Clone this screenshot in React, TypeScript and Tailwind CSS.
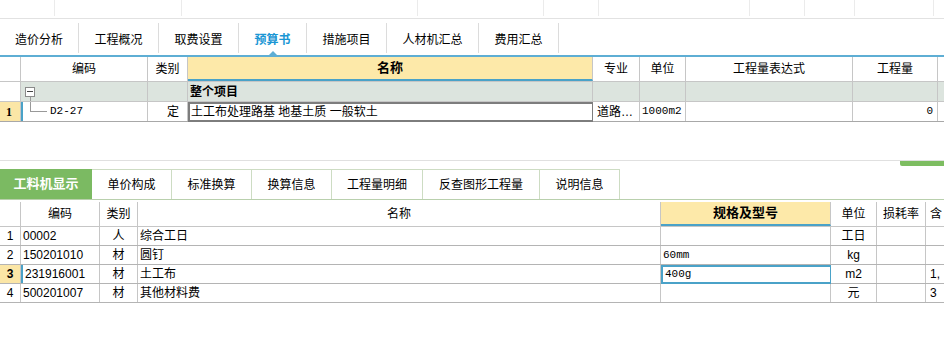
import React from "react";

type Cell = { w: string; content?: React.ReactNode; cls?: string };

const Row = ({ cells, cls }: { cells: Cell[]; cls: string }) => (
  <div className={`flex ${cls}`}>
    {cells.map((c, idx) => (
      <div
        key={idx}
        className={`${c.w} shrink-0 flex items-center overflow-hidden whitespace-nowrap border-r border-[#c6c6c6] ${c.cls ?? ""}`}
      >
        {c.content}
      </div>
    ))}
  </div>
);

const topTabs = ["造价分析", "工程概况", "取费设置", "预算书", "措施项目", "人材机汇总", "费用汇总"];
const topTabW = ["w-[79px]", "w-[80px]", "w-[80px]", "w-[68px]", "w-[80px]", "w-[92px]", "w-[80px]"];

const bottomTabs = ["工料机显示", "单价构成", "标准换算", "换算信息", "工程量明细", "反查图形工程量", "说明信息"];
const bottomTabW = ["w-[92px]", "w-[80px]", "w-[80px]", "w-[80px]", "w-[91px]", "w-[117px]", "w-[80px]"];

const rows = [
  { n: "1", code: "00002", type: "人", name: "综合工日", spec: "", unit: "工日", extra: "" },
  { n: "2", code: "150201010", type: "材", name: "圆钉", spec: "60mm", unit: "kg", extra: "" },
  { n: "3", code: "231916001", type: "材", name: "土工布", spec: "400g", unit: "m2", extra: "1," },
  { n: "4", code: "500201007", type: "材", name: "其他材料费", spec: "", unit: "元", extra: "3" },
];

export default function App() {
  return (
    <div className="w-[944px] h-[338px] bg-white overflow-hidden text-[12px] text-black font-['Liberation_Sans','Noto_Sans_CJK_SC',sans-serif]">
      {/* toolbar remnant */}
      <div className="flex h-[19px] border-b border-[#e2e2e2]">
        {["w-[55px]", "w-[127px]", "w-[236px]", "w-[126px]", "w-[55px]", "w-[151px]", "w-[55px]", "w-[50px]", "w-[79px]"].map((w, i) => (
          <div key={i} className={`${w} shrink-0 h-[16px] border-r border-[#ebebeb]`} />
        ))}
      </div>

      {/* main tabs */}
      <div className="flex items-end h-[36px] pb-[2px]">
        {topTabs.map((t, i) => (
          <div
            key={t}
            className={`${topTabW[i]} relative h-[30px] pt-[3px] flex items-center justify-center border-r border-[#dcdcdc] ${
              i === 3 ? "text-[#1a96d4] font-bold" : ""
            }`}
          >
            {t}
            {i === 3 && (
              <div className="absolute bottom-[-2px] left-1/2 -translate-x-1/2 w-0 h-0 border-l-[4px] border-r-[4px] border-b-[4px] border-l-transparent border-r-transparent border-b-[#5eaed4]" />
            )}
          </div>
        ))}
      </div>
      <div className="h-[2px] bg-[#5eaed4]" />

      {/* top grid */}
      <Row
        cls="h-[25px] border-b border-[#c6c6c6]"
        cells={[
          { w: "w-[21px]" },
          { w: "w-[127px]", content: "编码", cls: "justify-center" },
          { w: "w-[40px]", content: "类别", cls: "justify-center" },
          { w: "w-[405px]", content: "名称", cls: "justify-center font-bold text-[13px] bg-[#fde9a9] border-b-2 border-b-[#4aa2c8]" },
          { w: "w-[47px]", content: "专业", cls: "justify-center" },
          { w: "w-[46px]", content: "单位", cls: "justify-center" },
          { w: "w-[167px]", content: "工程量表达式", cls: "justify-center" },
          { w: "w-[85px]", content: "工程量", cls: "justify-center" },
        ]}
      />
      <Row
        cls="h-[20px] border-b border-[#c6c6c6]"
        cells={[
          { w: "w-[21px]" },
          {
            w: "w-[127px]",
            cls: "bg-[#dce4de] pl-[4px] relative",
            content: (
              <>
                <div className="w-[10px] h-[10px] border border-[#8a8a8a] bg-white flex items-center justify-center">
                  <div className="w-[6px] h-px bg-[#444]" />
                </div>
                <div className="absolute left-[9px] top-[15px] bottom-0 w-px bg-[#999]" />
              </>
            ),
          },
          { w: "w-[40px]", cls: "bg-[#dce4de]" },
          { w: "w-[405px]", content: "整个项目", cls: "bg-[#dce4de] font-bold pl-[2px]" },
          { w: "w-[47px]", cls: "bg-[#dce4de]" },
          { w: "w-[46px]", cls: "bg-[#dce4de]" },
          { w: "w-[167px]", cls: "bg-[#dce4de]" },
          { w: "w-[85px]", cls: "bg-[#dce4de]" },
          { w: "w-[6px]", cls: "bg-[#dce4de] border-r-0" },
        ]}
      />
      <Row
        cls="h-[20px] border-b border-[#a8a8a8]"
        cells={[
          { w: "w-[21px]", content: "1", cls: "bg-[#fbe6a6] font-bold pl-[6px] font-['Liberation_Serif',serif]" },
          {
            w: "w-[127px]",
            cls: "border-l-2 border-l-[#4aa2c8] pl-[27px] relative",
            content: (
              <>
                <div className="absolute left-[7px] top-0 w-[17px] h-[10px] border-l border-b border-[#999]" />
                <span className="font-['Liberation_Mono',monospace] text-[11px]">D2-27</span>
              </>
            ),
          },
          { w: "w-[40px]", content: "定", cls: "justify-end pr-[8px]" },
          { w: "w-[405px]", content: "土工布处理路基 地基土质 一般软土", cls: "border-2 border-[#7d7d7d]! pl-[1px] h-[20px]" },
          { w: "w-[47px]", content: "道路…", cls: "pl-[4px]" },
          { w: "w-[46px]", content: "1000m2", cls: "pl-[2px] font-['Liberation_Mono',monospace] text-[11px]" },
          { w: "w-[167px]" },
          { w: "w-[85px]", content: "0", cls: "justify-end pr-[4px] font-['Liberation_Mono',monospace] text-[11px]" },
        ]}
      />

      {/* spacer + splitter */}
      <div className="h-[38px]" />
      <div className="h-px bg-[#e0e0e0]" />
      <div className="flex justify-end h-[5px]">
        <div className="w-[44px] h-[5px] bg-[#7dbd61] rounded-bl-[2px]" />
      </div>

      {/* detail tabs */}
      <div className="h-[3px]" />
      <div className="flex h-[31px] border-b border-[#b9d0ad]">
        {bottomTabs.map((t, i) => (
          <div
            key={t}
            className={`${bottomTabW[i]} shrink-0 flex items-center justify-center ${
              i === 0 ? "bg-[#7bba62] text-white font-bold text-[13px]" : "border-t border-r border-[#cddcc3]"
            }`}
          >
            {t}
          </div>
        ))}
      </div>

      {/* detail grid */}
      <div className="h-[2px]" />
      <Row
        cls="h-[25px] border-b border-[#c6c6c6]"
        cells={[
          { w: "w-[21px]" },
          { w: "w-[79px]", content: "编码", cls: "justify-center" },
          { w: "w-[38px]", content: "类别", cls: "justify-center" },
          { w: "w-[523px]", content: "名称", cls: "justify-center" },
          { w: "w-[170px]", content: "规格及型号", cls: "justify-center font-bold text-[13px] bg-[#fde9a9] border-b-2 border-b-[#4aa2c8]" },
          { w: "w-[46px]", content: "单位", cls: "justify-center" },
          { w: "w-[49px]", content: "损耗率", cls: "justify-center" },
          { w: "w-[18px]", content: "含", cls: "pl-[4px] border-r-0" },
        ]}
      />
      {rows.map((r) => {
        const sel = r.n === "3";
        return (
          <Row
            key={r.n}
            cls="h-[19px] border-b border-[#b4b4b4]"
            cells={[
              { w: "w-[21px]", content: r.n, cls: `justify-center ${sel ? "bg-[#fbe6a6] font-bold" : ""}` },
              { w: "w-[79px]", content: r.code, cls: `pl-[2px] ${sel ? "border-l-2 border-l-[#4aa2c8] pl-0" : ""}` },
              { w: "w-[38px]", content: r.type, cls: "justify-center" },
              { w: "w-[523px]", content: r.name, cls: "pl-[2px]" },
              {
                w: "w-[170px]",
                content: r.spec,
                cls: `pl-[2px] font-['Liberation_Mono',monospace] text-[11px] ${sel ? "border-2 border-[#4aa2c8]! h-[19px]" : ""}`,
              },
              { w: "w-[46px]", content: r.unit, cls: "justify-center" },
              { w: "w-[49px]" },
              { w: "w-[18px]", content: r.extra, cls: "pl-[4px] border-r-0" },
            ]}
          />
        );
      })}
    </div>
  );
}
